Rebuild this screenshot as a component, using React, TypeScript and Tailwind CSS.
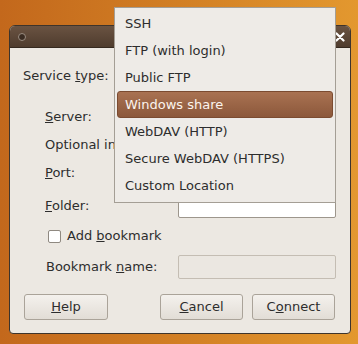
import React from "react";

const Row = ({ children, className = "" }: { children: React.ReactNode; className?: string }) => (
  <div className={`flex items-center ${className}`}>{children}</div>
);

const Input = ({ disabled = false }: { disabled?: boolean }) => (
  <div
    className={
      disabled
        ? "ml-auto mr-[14px] h-[24px] w-[158px] rounded-[2px] border border-[#c4bdb3] bg-[#ebe7e1]"
        : "ml-auto mr-[14px] h-[24px] w-[158px] rounded-[2px] border border-[#9d968c] bg-white"
    }
  />
);

const Button = ({ children, w, className = "" }: { children: React.ReactNode; w: string; className?: string }) => (
  <div
    className={`flex h-[26px] ${w} items-center justify-center rounded-[3px] border border-[#aaa399] bg-gradient-to-b from-[#f4f1ed] to-[#e2ddd6] text-[#2d2d2d] ${className}`}
  >
    {children}
  </div>
);

export default function App() {
  const items = [
    "SSH",
    "FTP (with login)",
    "Public FTP",
    "Windows share",
    "WebDAV (HTTP)",
    "Secure WebDAV (HTTPS)",
    "Custom Location",
  ];
  return (
    <div className="relative h-[344px] w-[358px] overflow-hidden bg-gradient-to-r from-[#c3681c] via-[#d27f24] to-[#e3982f] pl-[9px] pt-[25px] font-['DejaVu_Sans',sans-serif] text-[13px] leading-[16px] text-[#2d2d2d]">
      {/* Window */}
      <div className="flex h-[309px] w-[342px] flex-col overflow-hidden rounded-t-[6px] rounded-b-[4px] border border-[#3e342b] bg-[#ece8e2]">
        {/* Title bar */}
        <div className="relative flex h-[22px] shrink-0 items-center border-b border-[#35291f] bg-gradient-to-b from-[#6a5342] to-[#4f3c2e] pl-[8px] pr-[5px]">
          <div className="h-[8px] w-[8px] rounded-full border border-[#9a8c80] bg-[#3a2c22]" />
          <div className="flex-1 text-center font-bold text-white">Connect to Server</div>
          <svg width="10" height="10" viewBox="0 0 10 10" className="shrink-0">
            <path d="M1.5 1.5 L8.5 8.5 M8.5 1.5 L1.5 8.5" stroke="white" strokeWidth="2.2" strokeLinecap="round" />
          </svg>
        </div>
        {/* Body */}
        <div className="flex flex-col pt-[14px]">
          <Row className="h-[28px] pl-[13px]">
            <span>
              Service <u>t</u>ype:
            </span>
            <div className="ml-auto mr-[14px] h-[28px] w-[220px] rounded-[3px] border border-[#aaa399] bg-[#eeeae5]" />
          </Row>
          <Row className="mt-[15px] h-[24px] pl-[35px]">
            <span>
              <u>S</u>erver:
            </span>
            <Input />
          </Row>
          <Row className="mt-[4px] h-[24px] pl-[35px]">
            <span>Optional information:</span>
          </Row>
          <Row className="mt-[4px] h-[24px] pl-[35px]">
            <span>
              <u>P</u>ort:
            </span>
            <Input />
          </Row>
          <Row className="mt-[9px] h-[24px] pl-[35px]">
            <span>
              <u>F</u>older:
            </span>
            <Input />
          </Row>
          <Row className="mt-[10px] h-[16px] pl-[38px]">
            <div className="h-[13px] w-[13px] rounded-[2px] border border-[#8f8981] bg-white" />
            <span className="ml-[6px]">
              Add <u>b</u>ookmark
            </span>
          </Row>
          <Row className="mt-[11px] h-[24px] pl-[36px]">
            <span>
              Bookmark <u>n</u>ame:
            </span>
            <Input disabled />
          </Row>
          <Row className="mt-[15px] h-[26px] pl-[14px] pr-[15px]">
            <Button w="w-[84px]">
              <span>
                <u>H</u>elp
              </span>
            </Button>
            <Button w="w-[83px]" className="ml-auto">
              <span>
                <u>C</u>ancel
              </span>
            </Button>
            <Button w="w-[83px]" className="ml-[9px]">
              <span>
                C<u>o</u>nnect
              </span>
            </Button>
          </Row>
        </div>
      </div>

      {/* Popup menu */}
      <div className="absolute left-[114px] top-[7px] w-[222px] border border-[#a49e95] bg-[#eeebe7] px-[2px] pb-[3px] pt-[2px]">
        {items.map((it) =>
          it === "Windows share" ? (
            <div
              key={it}
              className="flex h-[27px] items-center rounded-[3px] border border-[#7b4b31] bg-gradient-to-b from-[#a97252] to-[#8c583b] pl-[7px] text-[#fbf4ee]"
            >
              {it}
            </div>
          ) : (
            <div key={it} className="flex h-[27px] items-center pl-[8px]">
              {it}
            </div>
          )
        )}
      </div>
    </div>
  );
}
